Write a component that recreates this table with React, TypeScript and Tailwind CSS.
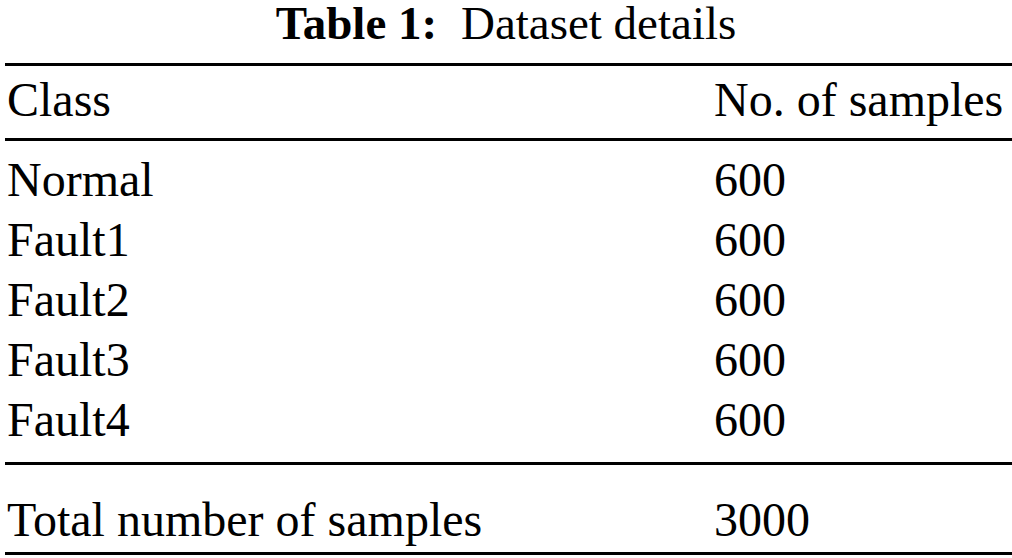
// Dataset details table (booktabs-style)
const ROWS: [string, string][] = [
  ['Normal', '600'],
  ['Fault1', '600'],
  ['Fault2', '600'],
  ['Fault3', '600'],
  ['Fault4', '600'],
];

function Rule() {
  return <div className="ml-[5px] h-[3px] bg-black" />;
}

function Row({ left, right, className = '' }: { left: string; right: string; className?: string }) {
  return (
    <div className={`flex leading-[60px] ${className}`}>
      <div className="w-[714px] pl-[7px]">{left}</div>
      <div>{right}</div>
    </div>
  );
}

export default function App() {
  return (
    <div className="h-[558px] w-[1012px] overflow-hidden bg-white text-black font-['Liberation_Serif',serif] text-[48px]">
      {/* caption */}
      <div className="flex h-[63px] justify-center text-[47px] leading-[46px]">
        <div className="whitespace-pre">
          <span className="font-bold">Table 1:</span>
          <span className="ml-[12px]"> Dataset details</span>
        </div>
      </div>

      <Rule />
      <Row left="Class" right="No. of samples" className="h-[72px] pt-[4px]" />
      <Rule />

      <div className="pt-[9px] pb-[12px]">
        {ROWS.map(([name, count]) => (
          <Row key={name} left={name} right={count} />
        ))}
      </div>

      <Rule />
      <Row left="Total number of samples" right="3000" className="pt-[25px] pb-[2px]" />
      <Rule />
    </div>
  );
}
